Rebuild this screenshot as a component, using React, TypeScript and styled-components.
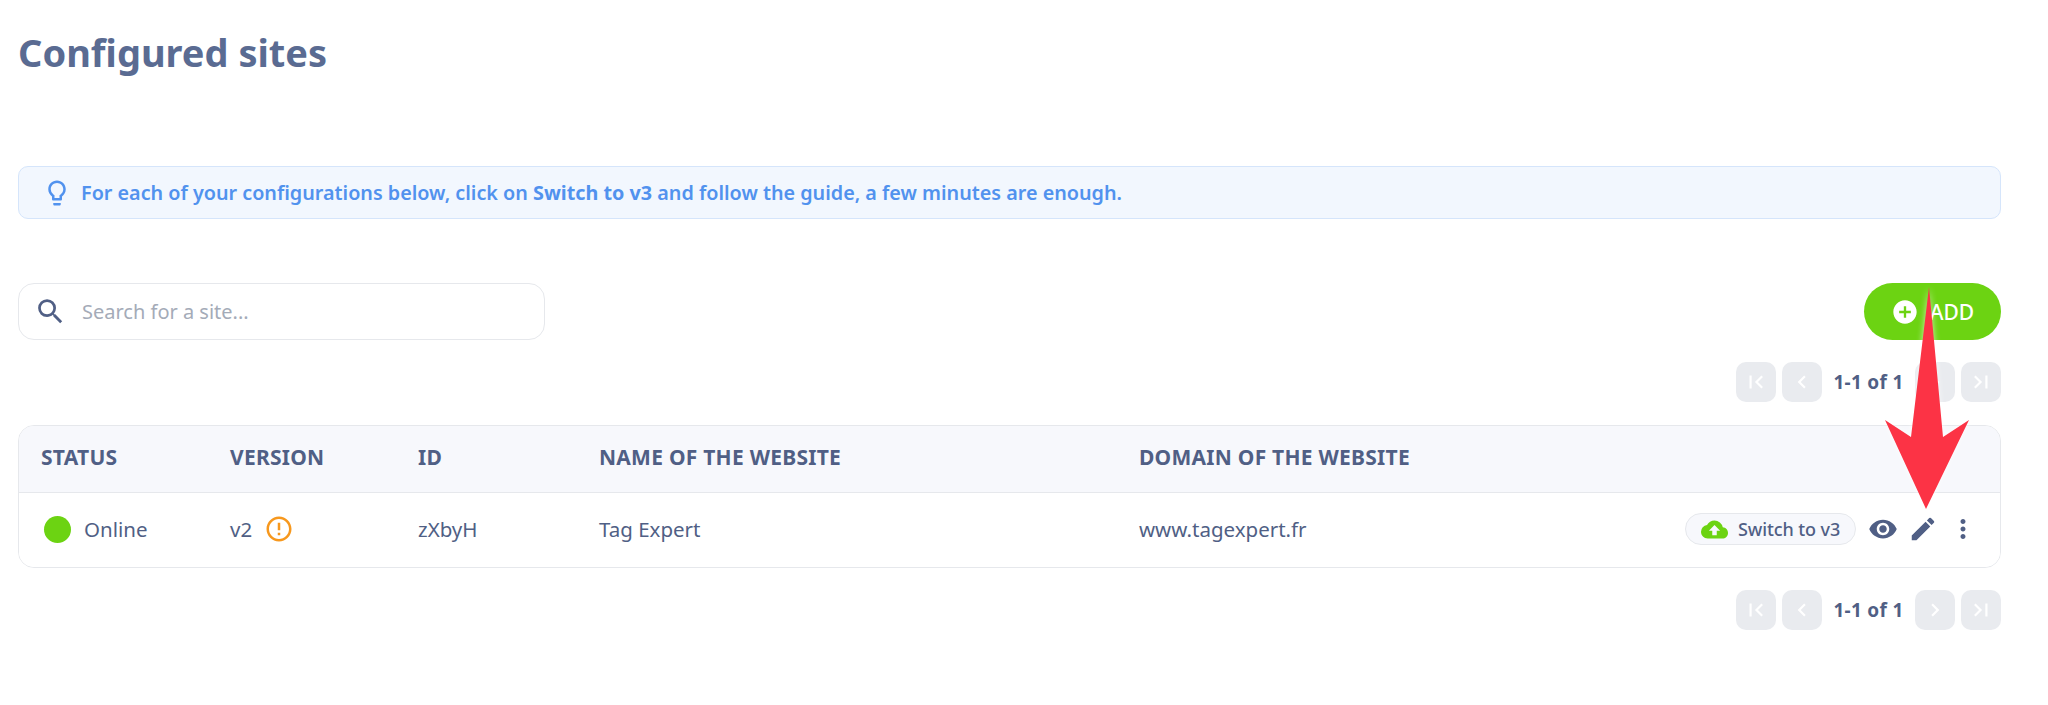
import React from "react";
import styled, { createGlobalStyle } from "styled-components";
import {
  MdAddCircle,
  MdChevronLeft,
  MdChevronRight,
  MdCloudUpload,
  MdEdit,
  MdErrorOutline,
  MdFirstPage,
  MdLastPage,
  MdMoreVert,
  MdOutlineLightbulb,
  MdSearch,
  MdVisibility,
} from "react-icons/md";

const Global = createGlobalStyle`
  html, body { margin: 0; padding: 0; background: #fff; }
  body { font-family: "Noto Sans", "Open Sans", sans-serif; color: #505f85; overflow: hidden; }
  * { box-sizing: border-box; }
`;

const Page = styled.div`
  position: relative;
  width: 2048px;
  height: 705px;
  padding: 0 47px 0 18px;
`;

const Title = styled.h1`
  margin: 0;
  height: 166px;
  padding-top: 28px;
  font-size: 38px;
  line-height: 48px;
  font-weight: 700;
  color: #5a6b92;
`;

const Banner = styled.div`
  display: flex;
  align-items: center;
  gap: 9px;
  height: 53px;
  padding-left: 23px;
  border: 1px solid #d5e5fb;
  border-radius: 10px;
  background: #f2f7fe;
  color: #5192ee;
  font-size: 19.75px;
  font-weight: 600;
  svg { font-size: 30px; flex: none; }
  b { font-weight: 700; }
`;

const Toolbar = styled.div`
  display: flex;
  align-items: center;
  justify-content: space-between;
  margin-top: 64px;
`;

const Search = styled.label`
  display: flex;
  align-items: center;
  gap: 15px;
  width: 527px;
  height: 57px;
  padding-left: 15px;
  border: 1px solid #e6e8ec;
  border-radius: 16px;
  color: #a4abb8;
  font-size: 20px;
  svg { font-size: 33px; color: #505f85; }
`;

const AddButton = styled.div`
  display: flex;
  align-items: center;
  justify-content: center;
  gap: 11px;
  width: 137px;
  height: 57px;
  border-radius: 29px;
  background: #6cd312;
  color: #fff;
  font-size: 21px;
  font-weight: 500;
  svg { font-size: 28px; }
`;

const Pager = styled.div<{ $top: number }>`
  display: flex;
  align-items: center;
  justify-content: flex-end;
  gap: 6px;
  margin-top: ${(p) => p.$top}px;
`;

const PageButton = styled.div`
  display: flex;
  align-items: center;
  justify-content: center;
  width: 40px;
  height: 40px;
  border-radius: 10px;
  background: #e9ebef;
  color: #fff;
  font-size: 26px;
`;

const PageLabel = styled.span`
  width: 81px;
  text-align: center;
  white-space: nowrap;
  font-size: 19px;
  font-weight: 700;
  color: #505f85;
  letter-spacing: 0.3px;
`;

const Table = styled.div`
  margin-top: 23px;
  border: 1px solid #e6e8ec;
  border-radius: 16px;
  overflow: hidden;
`;

const Row = styled.div<{ $head?: boolean }>`
  display: grid;
  grid-template-columns: 189px 188px 181px 540px 1fr;
  align-items: center;
  height: ${(p) => (p.$head ? 67 : 74)}px;
  padding-left: 22px;
  padding-bottom: ${(p) => (p.$head ? 4 : 2)}px;
  font-size: ${(p) => (p.$head ? 21 : 20.5)}px;
  letter-spacing: ${(p) => (p.$head ? 0.25 : 0)}px;
  font-weight: ${(p) => (p.$head ? 700 : 400)};
  background: ${(p) => (p.$head ? "#f7f8fc" : "#fff")};
  border-bottom: ${(p) => (p.$head ? "1px solid #e6e8ec" : "none")};
`;

const Cell = styled.div`
  display: flex;
  align-items: center;
  white-space: nowrap;
`;

const DomainCell = styled(Cell)`
  flex: 1;
`;

const Dot = styled.span`
  width: 27px;
  height: 27px;
  margin: 0 13px 0 3px;
  border-radius: 50%;
  background: #6cd312;
`;

const Warning = styled.span`
  display: flex;
  margin-left: 12px;
  color: #f7981d;
  font-size: 30px;
`;

const Actions = styled.div`
  display: flex;
  align-items: center;
  justify-content: flex-end;
  padding-right: 17px;
`;

const SwitchButton = styled.div`
  display: flex;
  align-items: center;
  gap: 10px;
  width: 171px;
  height: 32px;
  margin-right: 7px;
  padding-left: 15px;
  border: 1px solid #e6e8ec;
  border-radius: 16px;
  background: #f7f8fc;
  font-size: 18px;
  font-weight: 500;
  letter-spacing: -0.1px;
  svg { font-size: 27px; color: #6cd312; }
`;

const ActionIcon = styled.span`
  display: flex;
  justify-content: center;
  width: 40px;
  font-size: 30px;
  color: #505f85;
`;

const Arrow = styled.svg`
  position: absolute;
  left: 1870px;
  top: 280px;
  width: 120px;
  height: 240px;
  filter: drop-shadow(0 0 3px rgba(255, 255, 255, 0.7));
`;

function Pagination({ top }: { top: number }) {
  return (
    <Pager $top={top}>
      <PageButton><MdFirstPage /></PageButton>
      <PageButton><MdChevronLeft /></PageButton>
      <PageLabel>1-1 of 1</PageLabel>
      <PageButton><MdChevronRight /></PageButton>
      <PageButton><MdLastPage /></PageButton>
    </Pager>
  );
}

export default function App() {
  return (
    <Page>
      <Global />
      <Title>Configured sites</Title>
      <Banner>
        <MdOutlineLightbulb />
        <span>
          For each of your configurations below, click on <b>Switch to v3</b> and follow the guide, a few minutes are enough.
        </span>
      </Banner>
      <Toolbar>
        <Search>
          <MdSearch />
          Search for a site...
        </Search>
        <AddButton>
          <MdAddCircle />
          ADD
        </AddButton>
      </Toolbar>
      <Pagination top={22} />
      <Table>
        <Row $head>
          <Cell>STATUS</Cell>
          <Cell>VERSION</Cell>
          <Cell>ID</Cell>
          <Cell>NAME OF THE WEBSITE</Cell>
          <Cell>DOMAIN OF THE WEBSITE</Cell>
        </Row>
        <Row>
          <Cell><Dot />Online</Cell>
          <Cell>v2<Warning><MdErrorOutline /></Warning></Cell>
          <Cell>zXbyH</Cell>
          <Cell>Tag Expert</Cell>
          <Actions>
            <DomainCell>www.tagexpert.fr</DomainCell>
            <SwitchButton><MdCloudUpload />Switch to v3</SwitchButton>
            <ActionIcon><MdVisibility /></ActionIcon>
            <ActionIcon><MdEdit /></ActionIcon>
            <ActionIcon><MdMoreVert /></ActionIcon>
          </Actions>
        </Row>
      </Table>
      <Pagination top={22} />
      <Arrow viewBox="1870 280 120 240">
        <path d="M1929 287 L1943 437 L1969 420 L1926 509 L1885 420 L1911 437 Z" fill="#fc3345" />
      </Arrow>
    </Page>
  );
}
